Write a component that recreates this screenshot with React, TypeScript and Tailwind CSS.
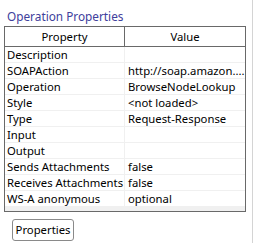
const ROWS: [string, string][] = [
  ["Description", ""],
  ["SOAPAction", "http://soap.amazon...."],
  ["Operation", "BrowseNodeLookup"],
  ["Style", "<not loaded>"],
  ["Type", "Request-Response"],
  ["Input", ""],
  ["Output", ""],
  ["Sends Attachments", "false"],
  ["Receives Attachments", "false"],
  ["WS-A anonymous", "optional"],
];

export default function App() {
  return (
    <div
      className="relative h-[243px] w-[255px] overflow-hidden bg-white text-[11.3px] text-black"
      style={{ fontFamily: '"Noto Sans", "DejaVu Sans", sans-serif' }}
    >
      <div className="absolute right-[2px] top-0 h-full w-px bg-[#d4d4d4]" />
      <div className="pl-[7px] pt-[8px] text-[11.8px] leading-[16px] text-[#40409c]">Operation Properties</div>

      <div className="ml-[4px] mt-[2px] w-[242px] border border-[#696969]">
        <div className="flex h-[20px] border-b border-[#696969] leading-[19px]">
          <div className="w-[120px] border-r border-[#696969] text-center">Property</div>
          <div className="flex-1 text-center">Value</div>
        </div>
        {ROWS.map(([name, value]) => (
          <div key={name} className="flex h-[16px] border-b border-[#f0f0f0] leading-[15px]">
            <div className="w-[120px] shrink-0 overflow-hidden whitespace-nowrap border-r border-[#f0f0f0] pl-[2px]">
              {name}
            </div>
            <div className="min-w-0 flex-1 overflow-hidden whitespace-nowrap pl-[3px]">{value}</div>
          </div>
        ))}
        <div className="h-[4px] bg-[#f0f0f0]" />
      </div>

      <button
        type="button"
        className="ml-[12px] mt-[7px] h-[22px] w-[62px] rounded-[3px] border border-[#8a8a8a] bg-white leading-[20px]"
      >
        Properties
      </button>
    </div>
  );
}
